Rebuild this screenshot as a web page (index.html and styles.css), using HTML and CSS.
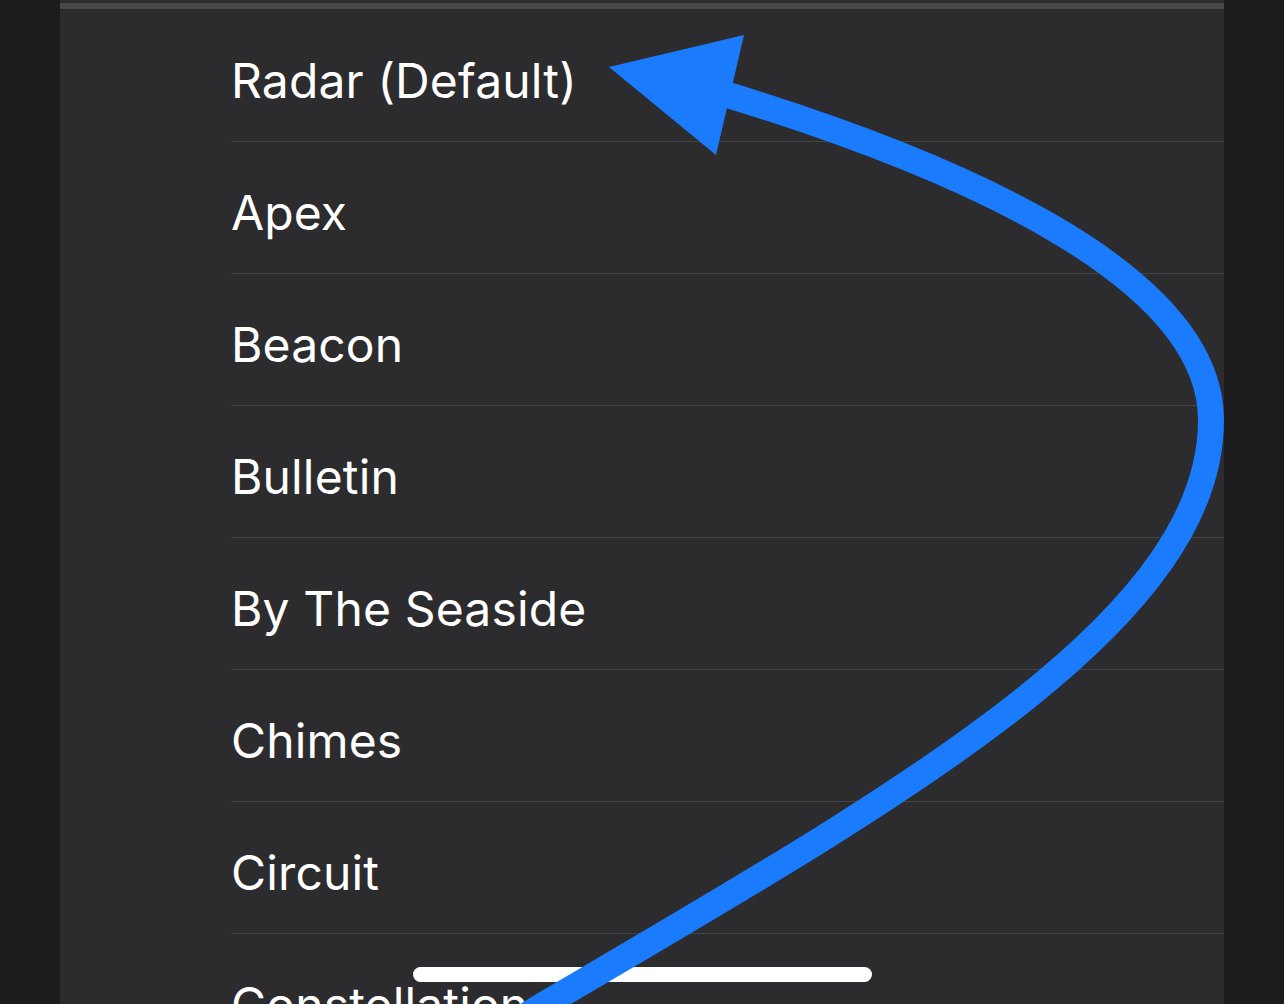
FILE: index.html
```html
<!DOCTYPE html>
<html lang="en">
<head>
<meta charset="utf-8">
<title>Ringtones</title>
<link rel="stylesheet" href="styles.css">
</head>
<body>
<div class="screen">
  <div class="panel">
    <div class="top-strip"></div>
    <ul class="list">
      <li class="row">Radar (Default)</li>
      <li class="row">Apex</li>
      <li class="row">Beacon</li>
      <li class="row">Bulletin</li>
      <li class="row">By The Seaside</li>
      <li class="row">Chimes</li>
      <li class="row">Circuit</li>
      <li class="row">Constellation</li>
    </ul>
  </div>
  <div class="home-indicator"></div>
  <svg class="annotation" width="1284" height="1004" viewBox="0 0 1284 1004" xmlns="http://www.w3.org/2000/svg">
    <path d="M 728 95 C 940 160, 1211 270, 1211 420 C 1211 620, 908 791, 545 1004 L 470 1050" fill="none" stroke="#1a7bfd" stroke-width="26" stroke-linejoin="round"/>
    <polygon points="609,67 744,35 716,155" fill="#1a7bfd"/>
  </svg>
</div>
</body>
</html>
```
FILE: styles.css
```css
html, body {
  margin: 0;
  padding: 0;
  background: #1c1c1e;
}

.screen {
  position: relative;
  width: 1284px;
  height: 1004px;
  overflow: hidden;
  background: #1c1c1e;
}

.panel {
  margin: 0 60px;
  height: 1004px;
  background: #2c2c2e;
  overflow: hidden;
}

.top-strip {
  margin-top: 3px;
  height: 6px;
  background: #48484a;
}

.list {
  list-style: none;
  margin: 1px 0 0;
  padding: 0 0 0 171px;
}

.row {
  box-sizing: border-box;
  height: 132px;
  padding-top: 42px;
  border-bottom: 1px solid #444446;
  font-family: Inter, "Liberation Sans", sans-serif;
  font-size: 48px;
  letter-spacing: 0.15px;
  line-height: 58px;
  color: #ffffff;
  white-space: nowrap;
}

.home-indicator {
  position: absolute;
  left: 413px;
  top: 967px;
  width: 459px;
  height: 15px;
  border-radius: 8px;
  background: #ffffff;
}

.annotation {
  position: absolute;
  left: 0;
  top: 0;
  pointer-events: none;
}
```
